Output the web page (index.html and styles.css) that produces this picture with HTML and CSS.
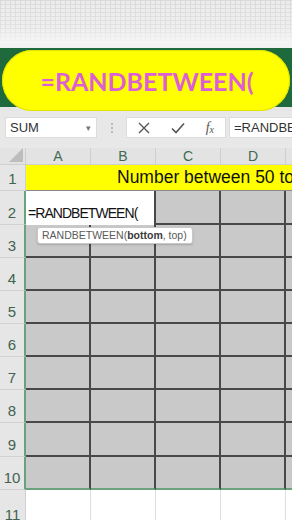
FILE: index.html
```html
<!DOCTYPE html>
<html>
<head>
<meta charset="utf-8">
<link rel="stylesheet" href="styles.css">
</head>
<body>
<div class="page">
  <div class="ribbon"></div>
  <div class="banner">
    <div class="pill"><span class="pill-text">=RANDBETWEEN(</span></div>
  </div>
  <div class="fbar">
    <div class="namebox"><span>SUM</span><span class="caret">&#9662;</span></div>
    <div class="dots"><i></i><i></i><i></i></div>
    <div class="fbtns">
      <svg width="12" height="12" viewBox="0 0 12 12"><path d="M1 1L11 11M11 1L1 11" stroke="#555" stroke-width="1.4" fill="none"/></svg>
      <svg width="14" height="12" viewBox="0 0 14 12"><path d="M1 6.5L5 10.5L13 1.5" stroke="#555" stroke-width="1.6" fill="none"/></svg>
      <span class="fx">f<sub>x</sub></span>
    </div>
    <div class="finput">=RANDBETWEEN(</div>
  </div>
  <div class="sheet">
    <div class="corner"><span class="tri"></span></div>
    <div class="ch">A</div><div class="ch">B</div><div class="ch">C</div><div class="ch">D</div><div class="ch last"></div>

    <div class="rh">1</div>
    <div class="title"><span>Number between 50 to 100</span></div>

    <div class="rh sel">2</div>
    <div class="edit">=RANDBETWEEN(</div>
    <div class="g"></div><div class="g"></div><div class="g last"></div>

    <div class="rh sel">3</div><div class="g"></div><div class="g"></div><div class="g"></div><div class="g"></div><div class="g last"></div>
    <div class="rh sel">4</div><div class="g"></div><div class="g"></div><div class="g"></div><div class="g"></div><div class="g last"></div>
    <div class="rh sel">5</div><div class="g"></div><div class="g"></div><div class="g"></div><div class="g"></div><div class="g last"></div>
    <div class="rh sel">6</div><div class="g"></div><div class="g"></div><div class="g"></div><div class="g"></div><div class="g last"></div>
    <div class="rh sel">7</div><div class="g"></div><div class="g"></div><div class="g"></div><div class="g"></div><div class="g last"></div>
    <div class="rh sel">8</div><div class="g"></div><div class="g"></div><div class="g"></div><div class="g"></div><div class="g last"></div>
    <div class="rh sel">9</div><div class="g"></div><div class="g"></div><div class="g"></div><div class="g"></div><div class="g last"></div>
    <div class="rh sel">10</div><div class="g b"></div><div class="g b"></div><div class="g b"></div><div class="g b"></div><div class="g b last"></div>
    <div class="rh r11">11</div><div class="w"></div><div class="w"></div><div class="w"></div><div class="w"></div><div class="w last"></div>

    <div class="tip">RANDBETWEEN(<b>bottom</b>, top)</div>
  </div>
</div>
</body>
</html>
```
FILE: styles.css
```css
* { box-sizing: border-box; }
html, body { margin: 0; padding: 0; }
body {
  width: 292px;
  height: 520px;
  overflow: hidden;
  background: #ebebeb;
  font-family: "Liberation Sans", Arial, sans-serif;
}
.page { width: 292px; height: 520px; overflow: hidden; }

.ribbon {
  height: 48px;
  background:
    linear-gradient(to bottom, rgba(245,245,245,0) 0, rgba(245,245,245,0.3) 28px, rgba(246,246,246,0.9) 42px, #f2f2f2 48px),
    repeating-linear-gradient(to right, #d9d9d9 0 1px, transparent 1px 5px),
    repeating-linear-gradient(to bottom, #dadada 0 1px, transparent 1px 4px),
    #ececec;
}

.banner {
  height: 63px;
  padding: 2px 2px 0 2px;
  background: linear-gradient(to bottom, #1f6a3d 0, #1f6a3d 59px, #e6e6e6 59px);
}
.pill {
  height: 61px;
  border-radius: 31px;
  background: #ffff00;
  box-shadow: inset 0 0 0 1px #e2e200;
  display: flex;
  align-items: center;
  justify-content: center;
  padding-left: 2px;
}
.pill-text {
  font-family: Lato, "Open Sans", sans-serif;
  font-weight: 700;
  font-size: 25px;
  color: #dd5fd6;
  letter-spacing: 0;
}

.fbar {
  height: 37px;
  padding: 6px 0 0 5px;
  display: flex;
  align-items: flex-start;
  background: #e8e8e8;
}
.namebox {
  width: 92px;
  height: 21px;
  background: #fff;
  border: 1px solid #dcdcdc;
  display: flex;
  align-items: center;
  justify-content: space-between;
  padding: 0 5px 0 4px;
  font-size: 13px;
  color: #333;
}
.caret { font-size: 9px; color: #777; }
.dots {
  width: 29px;
  height: 21px;
  display: flex;
  flex-direction: column;
  align-items: center;
  justify-content: center;
  gap: 2px;
}
.dots i { width: 2px; height: 2px; background: #b8b8b8; display: block; }
.fbtns {
  width: 100px;
  height: 21px;
  background: #fff;
  border: 1px solid #dcdcdc;
  display: flex;
  align-items: center;
  justify-content: space-between;
  padding: 0 11px 0 11px;
}
.fx {
  font-family: "Liberation Serif", serif;
  font-style: italic;
  font-size: 14px;
  color: #555;
  line-height: 1;
}
.fx sub { font-size: 10px; vertical-align: -1px; }
.finput {
  margin-left: 3px;
  flex: 1;
  height: 21px;
  background: #fff;
  border: 1px solid #dcdcdc;
  border-right: none;
  font-size: 13px;
  color: #333;
  padding-left: 4px;
  line-height: 19px;
  white-space: nowrap;
  overflow: hidden;
}

.sheet {
  position: relative;
  display: grid;
  grid-template-columns: 26px 65px 65px 65px 65px 6px;
  grid-template-rows: 17px 26px 34px 33px 33px 33px 33px 33px 33px 34px 33px 30px;
  background: #fff;
}
.corner {
  background: #e3e3e3;
  border-right: 1px solid #cfcfcf;
  border-bottom: 1px solid #cfcfcf;
  position: relative;
}
.tri {
  position: absolute;
  right: 2px;
  bottom: 2px;
  width: 0; height: 0;
  border-left: 14px solid transparent;
  border-bottom: 14px solid #bdbdbd;
}
.ch {
  background: #e3e3e3;
  border-right: 1px solid #cfcfcf;
  border-bottom: 1px solid #cfcfcf;
  color: #3f6b51;
  font-size: 14px;
  display: flex;
  align-items: center;
  justify-content: center;
}
.ch.last { border-right: none; }
.rh {
  background: #e6e6e6;
  border-bottom: 1px solid #d2d2d2;
  border-right: 1px solid #cfcfcf;
  color: #42634f;
  font-size: 15px;
  display: flex;
  align-items: flex-end;
  justify-content: center;
  padding-bottom: 3px;
}
.rh.sel { border-right: 2px solid #6aa27e; }
.rh.r11 { align-items: flex-start; padding-top: 16px; padding-bottom: 0; border-bottom: none; }
.title {
  grid-column: 2 / 7;
  background: #ffff00;
  border-bottom: 1px solid #8a8a8a;
  display: flex;
  align-items: center;
  padding-left: 91px;
  white-space: nowrap;
  overflow: hidden;
  font-family: "Liberation Sans", Arial, sans-serif;
  font-size: 17.5px;
  color: #111;
}
.edit {
  grid-column: 2 / 4;
  background: #fff;
  border-right: 2px solid #484848;
  display: flex;
  align-items: flex-end;
  padding: 0 0 4px 2px;
  font-size: 14px;
  letter-spacing: -0.95px;
  color: #111;
  white-space: nowrap;
}
.g {
  background: #c9c9c9;
  border-right: 2px solid #484848;
  border-bottom: 2px solid #484848;
}
.g.last { border-right: none; }
.g.b { border-bottom: 2px solid #6aa27e; }
.w {
  background: #fff;
  border-right: 1px solid #dedede;
}
.w.last { border-right: none; }

.tip {
  position: absolute;
  left: 37px;
  top: 79px;
  width: 156px;
  height: 17px;
  background: #fff;
  border: 1px solid #c8c8c8;
  border-radius: 3px;
  box-shadow: 0 1px 2px rgba(0,0,0,0.18);
  font-size: 10.5px;
  color: #5a5a5a;
  line-height: 15px;
  padding-left: 4px;
  white-space: nowrap;
}
.tip b { color: #3a3a3a; }
```
